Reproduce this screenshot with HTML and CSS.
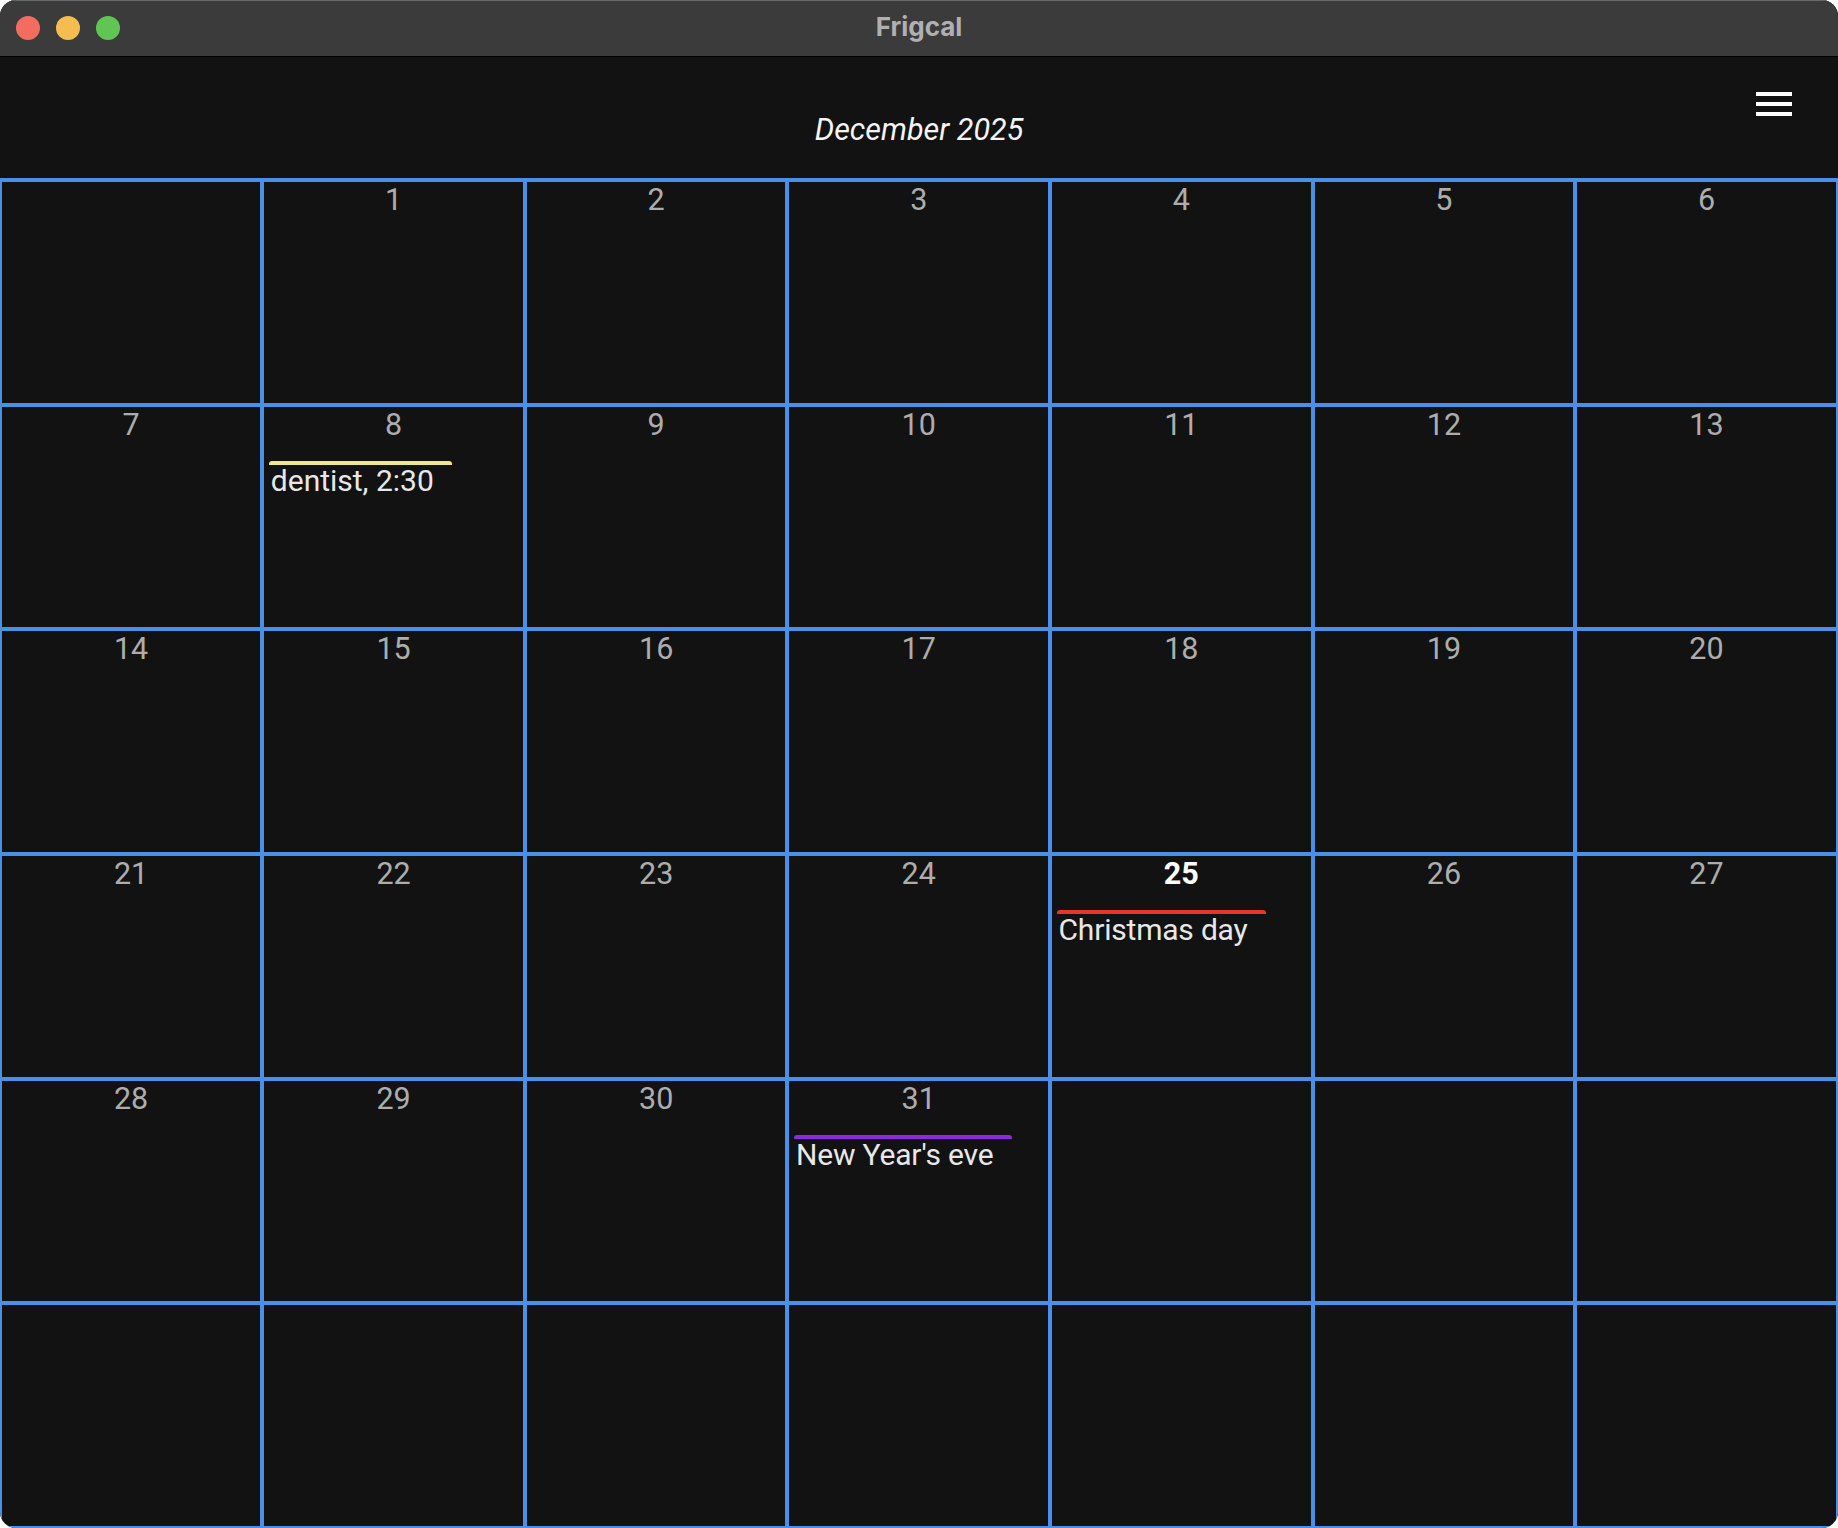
FILE: index.html
```html
<!DOCTYPE html>
<html lang="en">
<head>
<meta charset="utf-8">
<title>Frigcal</title>
<link rel="stylesheet" href="styles.css">
</head>
<body>
<div class="window">
  <div class="titlebar">
    <div class="lights"><span class="light red"></span><span class="light yellow"></span><span class="light green"></span></div>
    <div class="app-name">Frigcal</div>
  </div>
  <div class="header">
    <div class="month">December 2025</div>
    <div class="menu"><span></span><span></span><span></span></div>
  </div>
  <div class="grid">
    <div class="cell"></div>
    <div class="cell"><div class="num">1</div></div>
    <div class="cell"><div class="num">2</div></div>
    <div class="cell"><div class="num">3</div></div>
    <div class="cell"><div class="num">4</div></div>
    <div class="cell"><div class="num">5</div></div>
    <div class="cell"><div class="num">6</div></div>
    <div class="cell"><div class="num">7</div></div>
    <div class="cell"><div class="num">8</div><div class="event khaki">dentist, 2:30</div></div>
    <div class="cell"><div class="num">9</div></div>
    <div class="cell"><div class="num">10</div></div>
    <div class="cell"><div class="num">11</div></div>
    <div class="cell"><div class="num">12</div></div>
    <div class="cell"><div class="num">13</div></div>
    <div class="cell"><div class="num">14</div></div>
    <div class="cell"><div class="num">15</div></div>
    <div class="cell"><div class="num">16</div></div>
    <div class="cell"><div class="num">17</div></div>
    <div class="cell"><div class="num">18</div></div>
    <div class="cell"><div class="num">19</div></div>
    <div class="cell"><div class="num">20</div></div>
    <div class="cell"><div class="num">21</div></div>
    <div class="cell"><div class="num">22</div></div>
    <div class="cell"><div class="num">23</div></div>
    <div class="cell"><div class="num">24</div></div>
    <div class="cell"><div class="num today">25</div><div class="event crimson">Christmas day</div></div>
    <div class="cell"><div class="num">26</div></div>
    <div class="cell"><div class="num">27</div></div>
    <div class="cell"><div class="num">28</div></div>
    <div class="cell"><div class="num">29</div></div>
    <div class="cell"><div class="num">30</div></div>
    <div class="cell"><div class="num">31</div><div class="event violet">New Year's eve</div></div>
    <div class="cell"></div>
    <div class="cell"></div>
    <div class="cell"></div>
    <div class="cell"></div>
    <div class="cell"></div>
    <div class="cell"></div>
    <div class="cell"></div>
    <div class="cell"></div>
    <div class="cell"></div>
    <div class="cell"></div>
  </div>
</div>
</body>
</html>
```
FILE: styles.css
```css
* { box-sizing: border-box; }
html, body { margin: 0; padding: 0; background: #fff; }
.window {
  width: 1838px;
  height: 1528px;
  display: flex;
  flex-direction: column;
  border-radius: 16px;
  overflow: hidden;
  background: #121212;
  font-family: Roboto, sans-serif;
}
.titlebar {
  height: 57px;
  flex: none;
  display: grid;
  grid-template-columns: 1fr auto 1fr;
  align-items: center;
  padding: 0 16px 2px;
  background: #3b3b3b;
  border-top: 1px solid #6a6a6a;
  border-bottom: 1px solid #000;
}
.lights { display: flex; gap: 16px; }
.light { width: 24px; height: 24px; border-radius: 50%; }
.red { background: #f26d60; }
.yellow { background: #f5bd4f; }
.green { background: #61c554; }
.app-name {
  font-family: Inter, sans-serif;
  font-weight: 700;
  font-size: 26px;
  line-height: 30px;
  margin-bottom: 2px;
  color: #b0b0b0;
}
.header {
  flex: none;
  height: 123px;
  display: grid;
  grid-template-columns: 1fr auto 1fr;
  padding: 35px 46px 0;
  border-bottom: 2px solid #4890e8;
}
.month {
  grid-column: 2;
  font-style: italic;
  font-weight: 400;
  font-size: 30.5px;
  line-height: 36px;
  padding-top: 20px;
  color: #f4f4f4;
}
.menu {
  grid-column: 3;
  justify-self: end;
  width: 36px;
  display: flex;
  flex-direction: column;
  gap: 6px;
}
.menu span { height: 4px; background: #fff; }
.grid {
  flex: 1;
  width: 1838px;
  margin-left: -0.25px;
  display: grid;
  grid-template-columns: repeat(7, 1fr);
  grid-template-rows: repeat(6, 1fr);
  min-height: 0;
}
.cell {
  border: 2px solid #4890e8;
  min-width: 0;
}
.num {
  text-align: center;
  font-size: 30.5px;
  font-weight: 400;
  line-height: 36px;
  color: #adadad;
}
.today { color: #fff; font-weight: 700; }
.event {
  display: inline-block;
  margin: 18px 0 0 4.5px;
  padding: 0 18px 0 2px;
  border-top: 4px solid;
  border-radius: 3px 3px 0 0;
  font-size: 30px;
  line-height: 32px;
  color: #e8e8e8;
}
.khaki { border-color: #f0e68c; }
.crimson { border-color: #e9342a; letter-spacing: -0.2px; }
.violet { border-color: #8a2be2; letter-spacing: -0.17px; }
```
